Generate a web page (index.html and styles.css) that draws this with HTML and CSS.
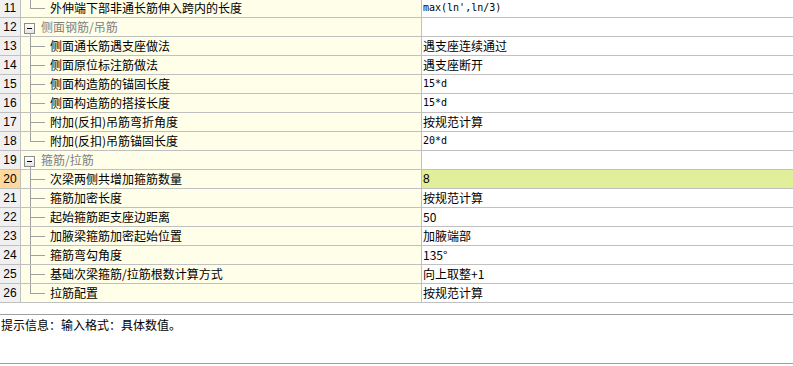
FILE: index.html
```html
<!DOCTYPE html>
<html lang="zh">
<head>
<meta charset="utf-8">
<link rel="stylesheet" href="styles.css">
</head>
<body>
<div class="grid">
  <div class="row"><div class="num">11</div><div class="label"><span class="branch last"><span class="bt"></span><span class="bb"></span></span><span class="txt">外伸端下部非通长筋伸入跨内的长度</span></div><div class="val mono">max(ln',ln/3)</div></div>
  <div class="row group"><div class="num">12</div><div class="label"><span class="node"><span class="box"><span class="minus"></span></span><span class="tail"></span></span><span class="gtxt">侧面钢筋/吊筋</span></div><div class="val"></div></div>
  <div class="row"><div class="num">13</div><div class="label"><span class="branch"><span class="bt"></span><span class="bb"></span></span><span class="txt">侧面通长筋遇支座做法</span></div><div class="val">遇支座连续通过</div></div>
  <div class="row"><div class="num">14</div><div class="label"><span class="branch"><span class="bt"></span><span class="bb"></span></span><span class="txt">侧面原位标注筋做法</span></div><div class="val">遇支座断开</div></div>
  <div class="row"><div class="num">15</div><div class="label"><span class="branch"><span class="bt"></span><span class="bb"></span></span><span class="txt">侧面构造筋的锚固长度</span></div><div class="val mono">15*d</div></div>
  <div class="row"><div class="num">16</div><div class="label"><span class="branch"><span class="bt"></span><span class="bb"></span></span><span class="txt">侧面构造筋的搭接长度</span></div><div class="val mono">15*d</div></div>
  <div class="row"><div class="num">17</div><div class="label"><span class="branch"><span class="bt"></span><span class="bb"></span></span><span class="txt">附加(反扣)吊筋弯折角度</span></div><div class="val">按规范计算</div></div>
  <div class="row"><div class="num">18</div><div class="label"><span class="branch last"><span class="bt"></span><span class="bb"></span></span><span class="txt">附加(反扣)吊筋锚固长度</span></div><div class="val mono">20*d</div></div>
  <div class="row group"><div class="num">19</div><div class="label"><span class="node"><span class="box"><span class="minus"></span></span><span class="tail"></span></span><span class="gtxt">箍筋/拉筋</span></div><div class="val"></div></div>
  <div class="row active"><div class="num">20</div><div class="label"><span class="branch"><span class="bt"></span><span class="bb"></span></span><span class="txt">次梁两侧共增加箍筋数量</span></div><div class="val">8</div></div>
  <div class="row"><div class="num">21</div><div class="label"><span class="branch"><span class="bt"></span><span class="bb"></span></span><span class="txt">箍筋加密长度</span></div><div class="val">按规范计算</div></div>
  <div class="row"><div class="num">22</div><div class="label"><span class="branch"><span class="bt"></span><span class="bb"></span></span><span class="txt">起始箍筋距支座边距离</span></div><div class="val">50</div></div>
  <div class="row"><div class="num">23</div><div class="label"><span class="branch"><span class="bt"></span><span class="bb"></span></span><span class="txt">加腋梁箍筋加密起始位置</span></div><div class="val">加腋端部</div></div>
  <div class="row"><div class="num">24</div><div class="label"><span class="branch"><span class="bt"></span><span class="bb"></span></span><span class="txt">箍筋弯勾角度</span></div><div class="val">135°</div></div>
  <div class="row"><div class="num">25</div><div class="label"><span class="branch"><span class="bt"></span><span class="bb"></span></span><span class="txt">基础次梁箍筋/拉筋根数计算方式</span></div><div class="val">向上取整+1</div></div>
  <div class="row"><div class="num">26</div><div class="label"><span class="branch last"><span class="bt"></span><span class="bb"></span></span><span class="txt">拉筋配置</span></div><div class="val">按规范计算</div></div>
</div>
<div class="hint">提示信息：输入格式：具体数值。</div>
</body>
</html>
```
FILE: styles.css
```css
html, body {
  margin: 0;
  padding: 0;
  background: #ffffff;
  width: 793px;
  height: 366px;
  overflow: hidden;
  font-family: "Noto Sans CJK SC", "DejaVu Sans", sans-serif;
  font-size: 12px;
  color: #000000;
}

.grid {
  margin-top: -1px;
  display: flex;
  flex-direction: column;
}

.row {
  display: flex;
  height: 19px;
}

.row > div {
  height: 18px;
  border-bottom: 1px solid #c0c0c0;
  border-right: 1px solid #c0c0c0;
  display: flex;
  align-items: center;
  line-height: 18px;
  white-space: nowrap;
}

.num {
  width: 20px;
  flex: none;
  justify-content: center;
  background: #f0f0f0;
  font-family: "Liberation Sans", "DejaVu Sans", sans-serif;
  font-size: 12px;
}

.label {
  width: 400px;
  flex: none;
  background: #fffee8;
  align-items: stretch !important;
}

.val {
  flex: 1;
  padding-left: 1px;
  background: #ffffff;
  border-right: none !important;
}

.mono {
  font-family: "DejaVu Sans Mono", "Liberation Mono", monospace;
  font-size: 10px;
}

.active .num { background: #ffd89b; }
.active .val { background: #e1ee9a; font-family: "Liberation Sans", sans-serif; }

.branch {
  width: 15px;
  margin-left: 9px;
  display: flex;
  flex-direction: column;
  flex: none;
}
.branch .bt {
  height: 9px;
  border-left: 1px solid #a0a0a0;
  border-bottom: 1px solid #a0a0a0;
}
.branch .bb {
  flex: 1;
  border-left: 1px solid #a0a0a0;
}
.branch.last .bb { border-left-color: transparent; }

.txt {
  margin-left: 5px;
  display: flex;
  align-items: center;
}

.node {
  margin-left: 3px;
  width: 11px;
  flex: none;
  display: flex;
  flex-direction: column;
  padding-top: 5px;
}
.box {
  width: 9px;
  height: 9px;
  border: 1px solid #8c8c8c;
  background: linear-gradient(#ffffff, #e4e4e4);
  display: flex;
  align-items: center;
  justify-content: center;
  flex: none;
}
.minus {
  width: 5px;
  height: 1px;
  background: #000000;
}
.tail {
  flex: 1;
  margin-left: 6px;
  border-left: 1px solid #a0a0a0;
}

.gtxt {
  margin-left: 6px;
  color: #808080;
  display: flex;
  align-items: center;
}

.hint {
  margin-top: 11px;
  border-top: 1px solid #a0a0a0;
  border-bottom: 1px solid #a0a0a0;
  padding-left: 1px;
  line-height: 20px;
  box-sizing: border-box;
  height: 50px;
}
```
